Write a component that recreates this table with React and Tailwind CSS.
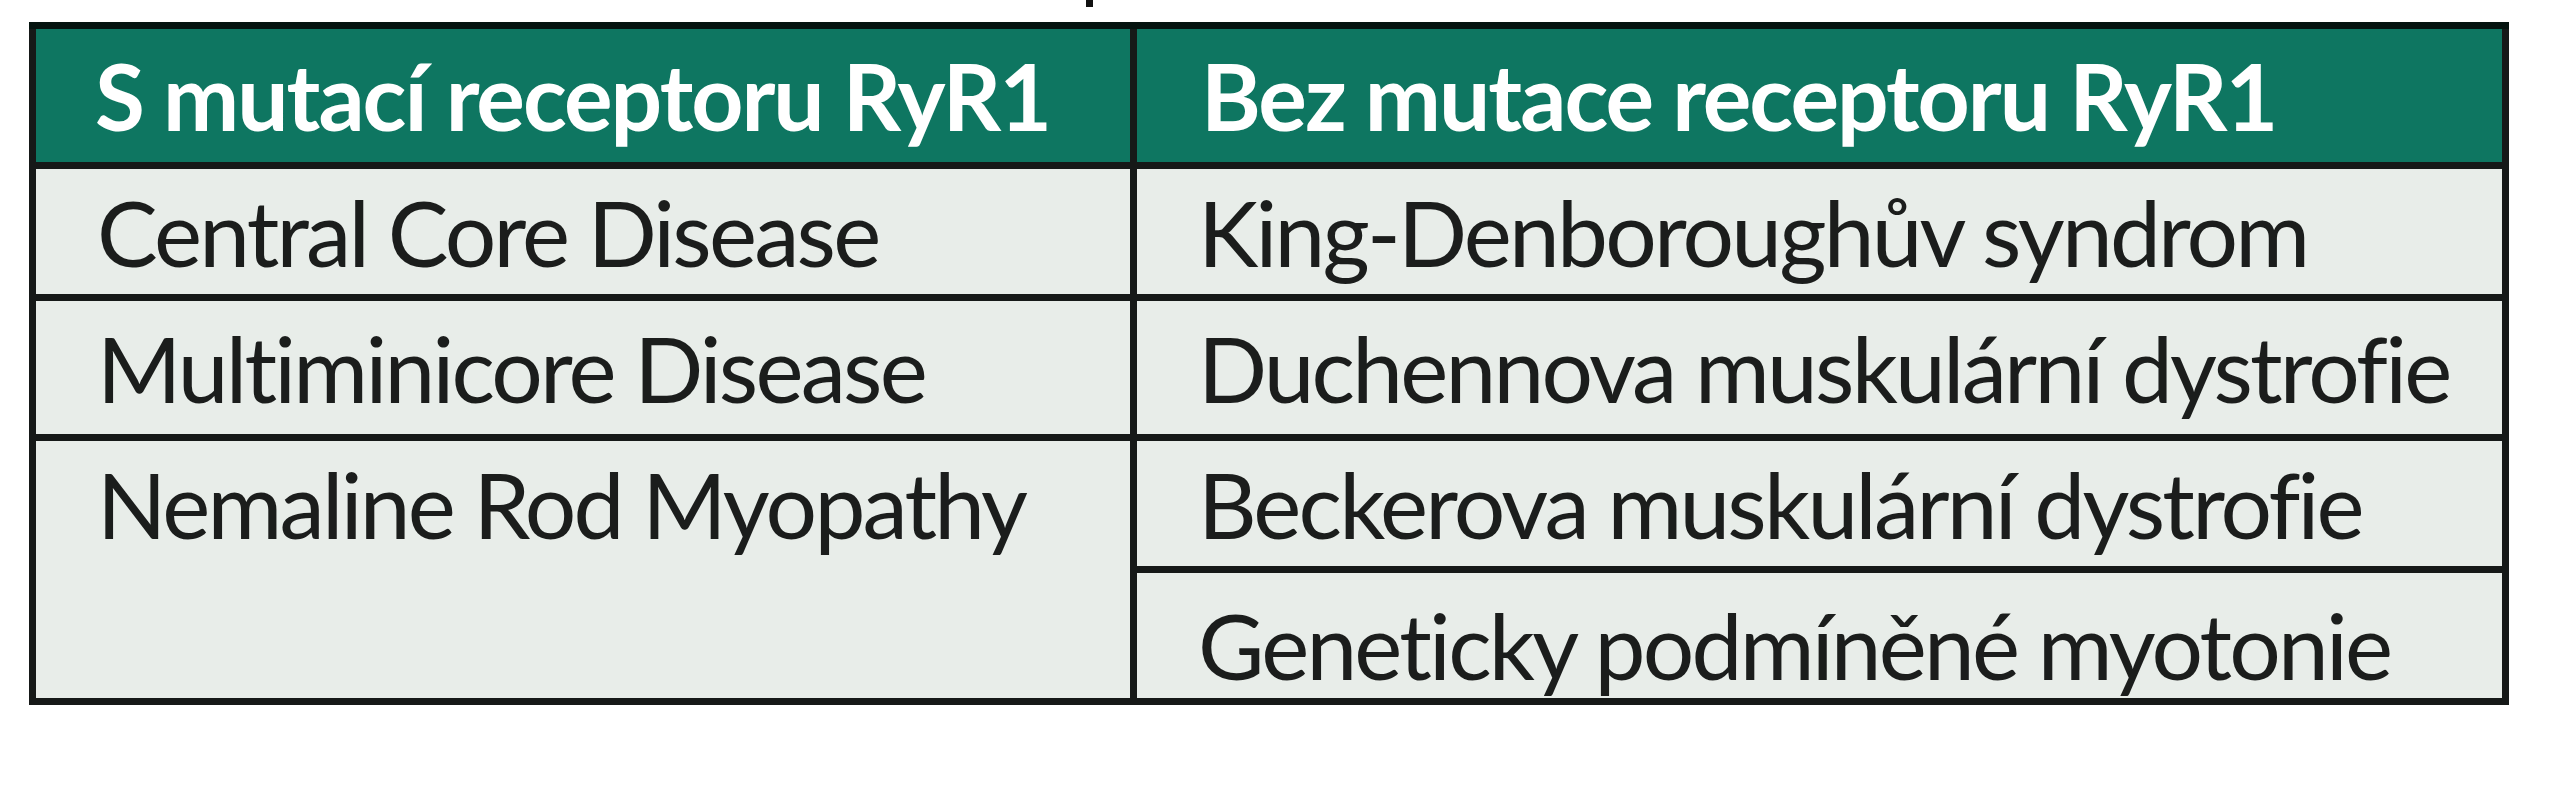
import React from 'react';

const body = "text-[91px] leading-none text-[#1b1d1c] tracking-[-2.8px]";
const head = "text-[91px] leading-none font-bold text-white tracking-[-2px]";

const Cell = ({ className = '', children }) => (
  <div className={`flex items-center bg-[#e8ede9] ${className}`}>{children}</div>
);

export default function App() {
  return (
    <div className="w-[2561px] h-[800px] bg-white font-['Lato','Liberation_Sans',sans-serif]">
      {/* remnant of the caption above the table */}
      <div className="ml-[1086px] w-[7px] h-[7px] bg-[#111]" />

      <div className="mt-[15px] ml-[29px] w-[2480px] bg-[#161918] border-t-[7px] border-[#05130f] px-[7px] pb-[7px]">
        <div className="grid grid-cols-[1094px_1365px] grid-rows-[133px_125px_133px_125px_125px] gap-[7px] bg-[#161918]">
          <div className="flex items-center bg-[#0e7661] pl-[59px]">
            <span className={head}>S mutací receptoru RyR1</span>
          </div>
          <div className="flex items-center bg-[#0e7661] pl-[64px]">
            <span className={head}>Bez mutace receptoru RyR1</span>
          </div>

          <Cell className="pl-[61px]">
            <span className={body}>Central Core Disease</span>
          </Cell>
          <Cell className="pl-[61px]">
            <span className={body}>King-Denboroughův syndrom</span>
          </Cell>

          <Cell className="pl-[61px]">
            <span className={body}>Multiminicore Disease</span>
          </Cell>
          <Cell className="pl-[61px]">
            <span className={body}>Duchennova muskulární dystrofie</span>
          </Cell>

          <div className="row-span-2 bg-[#e8ede9] pl-[61px] pt-[17px]">
            <span className={body}>Nemaline Rod Myopathy</span>
          </div>
          <Cell className="pl-[61px]">
            <span className={body}>Beckerova muskulární dystrofie</span>
          </Cell>
          <Cell className="pl-[61px] pt-[18px]">
            <span className={body}>Geneticky podmíněné myotonie</span>
          </Cell>
        </div>
      </div>
    </div>
  );
}
